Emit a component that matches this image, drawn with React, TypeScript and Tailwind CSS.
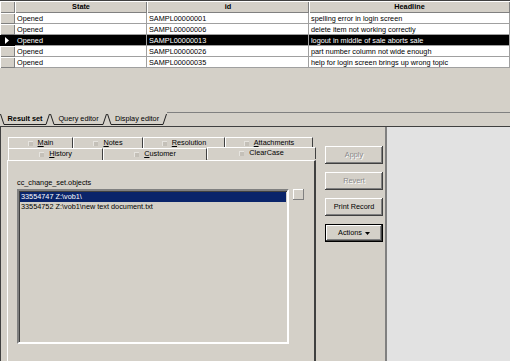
import React from 'react';

const ROWS = [
  { id: 'SAMPL00000001', headline: 'spelling error in login screen' },
  { id: 'SAMPL00000006', headline: 'delete item not working correctly' },
  { id: 'SAMPL00000013', headline: 'logout in middle of sale aborts sale', selected: true },
  { id: 'SAMPL00000026', headline: 'part number column not wide enough' },
  { id: 'SAMPL00000035', headline: 'help for login screen brings up wrong topic' },
];

const raised = 'shadow-[inset_1px_1px_#ffffff,inset_-1px_-1px_#808080]';

const ResultGrid: React.FC = () => (
  <div className="grid grid-cols-[15px_132px_162px_1fr] border-t border-[#404040]">
    <div className={`h-[12px] bg-[#d4d0c8] ${raised}`} />
    {['State', 'id', 'Headline'].map((h) => (
      <div key={h} className={`h-[12px] bg-[#d4d0c8] ${raised} text-center font-bold leading-[12px]`}>
        {h}
      </div>
    ))}
    {ROWS.map((r) => (
      <React.Fragment key={r.id}>
        <div
          className={`h-[11px] flex items-center pl-[5px] ${
            r.selected ? 'bg-black' : `bg-[#d4d0c8] ${raised}`
          }`}
        >
          {r.selected && (
            <svg width="4" height="7" viewBox="0 0 4 7">
              <path d="M0 0 L4 3.5 L0 7 Z" fill="#ffffff" />
            </svg>
          )}
        </div>
        {['Opened', r.id, r.headline].map((t, i) => (
          <div
            key={i}
            className={`h-[11px] leading-[11px] pl-[2px] border-r border-b border-[#a0a0a0] whitespace-nowrap overflow-hidden ${
              r.selected ? 'bg-black text-white' : 'bg-white'
            }`}
          >
            {t}
          </div>
        ))}
      </React.Fragment>
    ))}
  </div>
);

const SheetTab: React.FC<{ label: string; width: number; active?: boolean; last?: boolean }> = ({
  label,
  width,
  active,
}) => (
  <div className={`relative h-[11px] flex items-center justify-center ${active ? 'font-bold z-10' : ''}`} style={{ width }}>
    <svg className="absolute inset-0 w-full h-full" viewBox={`0 0 ${width} 11`} preserveAspectRatio="none">
      <polyline
        points={`0.5,0 4,10.5 ${width - 4},10.5 ${width - 0.5},0`}
        fill="none"
        stroke="#202020"
        strokeWidth="1"
        vectorEffect="non-scaling-stroke"
      />
    </svg>
    <span className="relative">{label}</span>
  </div>
);

const Icon: React.FC = () => (
  <span className="inline-block w-[5px] h-[5px] bg-[#c4c0b8] shadow-[inset_1px_1px_#e6e4df]" />
);

const PageTab: React.FC<{ label: string; u?: boolean; width: number; active?: boolean }> = ({ label, u, width, active }) => (
  <div
    className={`h-full flex items-center justify-center gap-[5px] border-t border-l border-t-white border-l-white border-r border-r-[#404040] ${
      active ? 'relative z-10 -mb-[1px] -mt-[1px] bg-[#d4d0c8]' : ''
    }`}
    style={{ width }}
  >
    <Icon />
    <span>
      {u ? (
        <>
          <span className="underline">{label[0]}</span>
          {label.slice(1)}
        </>
      ) : (
        label
      )}
    </span>
  </div>
);

const Btn: React.FC<{ label: React.ReactNode; disabled?: boolean; def?: boolean }> = ({ label, disabled, def }) => (
  <div className={`h-[18px] ${def ? 'border border-black' : ''}`}>
    <div
      className={`h-full flex items-center justify-center bg-[#d4d0c8] shadow-[inset_-1px_-1px_#404040,inset_1px_1px_#ffffff,inset_-2px_-2px_#808080] ${
        disabled ? 'text-[#8a8a8a] [text-shadow:1px_1px_#ffffff]' : ''
      }`}
    >
      {label}
    </div>
  </div>
);

export default function App() {
  return (
    <div className="w-[510px] h-[361px] overflow-hidden bg-[#d4d0c8] font-['Liberation_Sans',Arial,sans-serif] text-[7.3px] text-black flex flex-col">
      <ResultGrid />
      <div className="h-[44px]" />
      <div className="flex items-end h-[13px]">
        <SheetTab label="Result set" width={50} active />
        <SheetTab label="Query editor" width={57} />
        <SheetTab label="Display editor" width={60} />
        <div className="flex-1 h-full border-t border-[#808080]" />
      </div>
      <div className="h-[2px] border-b border-[#404040]" />
      <div className="flex flex-1 min-h-0">
        <div className="w-[385px] flex border-l border-[#404040] pl-[6px] pt-[10px]">
          <div className="w-[309px] flex flex-col">
            <div className="h-[11px] flex pl-[1px]">
              <PageTab label="Main" u width={65} />
              <PageTab label="Notes" u width={70} />
              <PageTab label="Resolution" u width={82} />
              <PageTab label="Attachments" u width={88} />
            </div>
            <div className="h-[12px] flex pl-[1px]">
              <PageTab label="History" u width={95} />
              <PageTab label="Customer" u width={104} />
              <PageTab label="ClearCase" width={109} active />
            </div>
            <div className="flex-1 border-t border-l border-white border-r-2 border-r-[#404040] pl-[9px] pt-[18px]">
              <div className="leading-[8px]">cc_change_set.objects</div>
              <div className="flex mt-[2px]">
                <div className="w-[272px] h-[155px] border-2 border-t-[#808080] border-l-[#808080] border-b-white border-r-white shadow-[inset_1px_1px_#404040] pl-[1px] pt-[1px]">
                  <div className="h-[10px] leading-[10px] pl-[1px] bg-[#0a246a] text-white mr-[1px]">33554747 Z:\vob1\</div>
                  <div className="h-[10px] leading-[10px] pl-[1px]">33554752 Z:\vob1\new text document.txt</div>
                </div>
                <div className={`ml-[4px] w-[11px] h-[11px] bg-[#d4d0c8] shadow-[inset_-1px_-1px_#808080,inset_1px_1px_#ffffff]`} />
              </div>
            </div>
          </div>
          <div className="w-[58px] ml-[9px] mt-[9px] flex flex-col gap-[8px]">
            <Btn label="Apply" disabled />
            <Btn label="Revert" disabled />
            <Btn label="Print Record" />
            <Btn
              def
              label={
                <span className="flex items-center gap-[3px]">
                  Actions
                  <svg width="5" height="3" viewBox="0 0 5 3">
                    <path d="M0 0 H5 L2.5 3 Z" fill="#000000" />
                  </svg>
                </span>
              }
            />
          </div>
        </div>
        <div className="flex-1 border-l-2 border-[#808080] bg-[#e2e2e2]" />
      </div>
    </div>
  );
}
